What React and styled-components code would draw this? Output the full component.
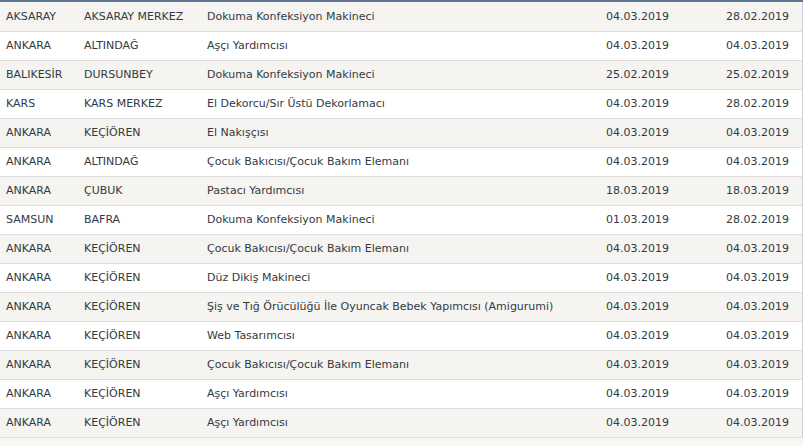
import React from 'react';
import styled, { createGlobalStyle } from 'styled-components';

const GlobalStyle = createGlobalStyle`
  html, body {
    margin: 0;
    padding: 0;
    background: #f6f6f5;
  }
`;

//wrapper for the whole list
const Wrapper = styled.div`
  width: 803px;
  height: 446px;
  overflow: hidden;
  border-top: 2px solid #5b7491;
  box-sizing: border-box;
  font-family: "DejaVu Sans", Verdana, sans-serif;
  font-size: 11px;
  color: #333a44;
  background: #f7f7f6;
`;

//one row of the list
const Row = styled.div`
  display: grid;
  grid-template-columns: 78px 123px 1fr 120px 120px;
  height: 29px;
  box-sizing: border-box;
  border-bottom: 1px solid #dddddd;
  border-right: 1px solid #c9d2dc;
  background: ${(p) => (p.$odd ? '#f5f4f0' : '#ffffff')};

  &:first-child {
    height: 30px;
    padding-top: 1px;
  }
`;

//cell inside a row
const Cell = styled.div`
  line-height: 28px;
  white-space: nowrap;
  overflow: hidden;
  padding: ${(p) => (p.$right ? '0 13px 0 0' : '0 0 0 6px')};
  text-align: ${(p) => (p.$right ? 'right' : 'left')};
`;

const rows = [
  ['AKSARAY', 'AKSARAY MERKEZ', 'Dokuma Konfeksiyon Makineci', '04.03.2019', '28.02.2019'],
  ['ANKARA', 'ALTINDAĞ', 'Aşçı Yardımcısı', '04.03.2019', '04.03.2019'],
  ['BALIKESİR', 'DURSUNBEY', 'Dokuma Konfeksiyon Makineci', '25.02.2019', '25.02.2019'],
  ['KARS', 'KARS MERKEZ', 'El Dekorcu/Sır Üstü Dekorlamacı', '04.03.2019', '28.02.2019'],
  ['ANKARA', 'KEÇİÖREN', 'El Nakışçısı', '04.03.2019', '04.03.2019'],
  ['ANKARA', 'ALTINDAĞ', 'Çocuk Bakıcısı/Çocuk Bakım Elemanı', '04.03.2019', '04.03.2019'],
  ['ANKARA', 'ÇUBUK', 'Pastacı Yardımcısı', '18.03.2019', '18.03.2019'],
  ['SAMSUN', 'BAFRA', 'Dokuma Konfeksiyon Makineci', '01.03.2019', '28.02.2019'],
  ['ANKARA', 'KEÇİÖREN', 'Çocuk Bakıcısı/Çocuk Bakım Elemanı', '04.03.2019', '04.03.2019'],
  ['ANKARA', 'KEÇİÖREN', 'Düz Dikiş Makineci', '04.03.2019', '04.03.2019'],
  ['ANKARA', 'KEÇİÖREN', 'Şiş ve Tığ Örücülüğü İle Oyuncak Bebek Yapımcısı (Amigurumi)', '04.03.2019', '04.03.2019'],
  ['ANKARA', 'KEÇİÖREN', 'Web Tasarımcısı', '04.03.2019', '04.03.2019'],
  ['ANKARA', 'KEÇİÖREN', 'Çocuk Bakıcısı/Çocuk Bakım Elemanı', '04.03.2019', '04.03.2019'],
  ['ANKARA', 'KEÇİÖREN', 'Aşçı Yardımcısı', '04.03.2019', '04.03.2019'],
  ['ANKARA', 'KEÇİÖREN', 'Aşçı Yardımcısı', '04.03.2019', '04.03.2019'],
];

const App = () => {
  return (
    <Wrapper>
      <GlobalStyle />
      {rows.map((r, i) => (
        <Row key={i} $odd={i % 2 === 0}>
          <Cell>{r[0]}</Cell>
          <Cell>{r[1]}</Cell>
          <Cell>{r[2]}</Cell>
          <Cell $right>{r[3]}</Cell>
          <Cell $right>{r[4]}</Cell>
        </Row>
      ))}
    </Wrapper>
  );
};

export default App;
